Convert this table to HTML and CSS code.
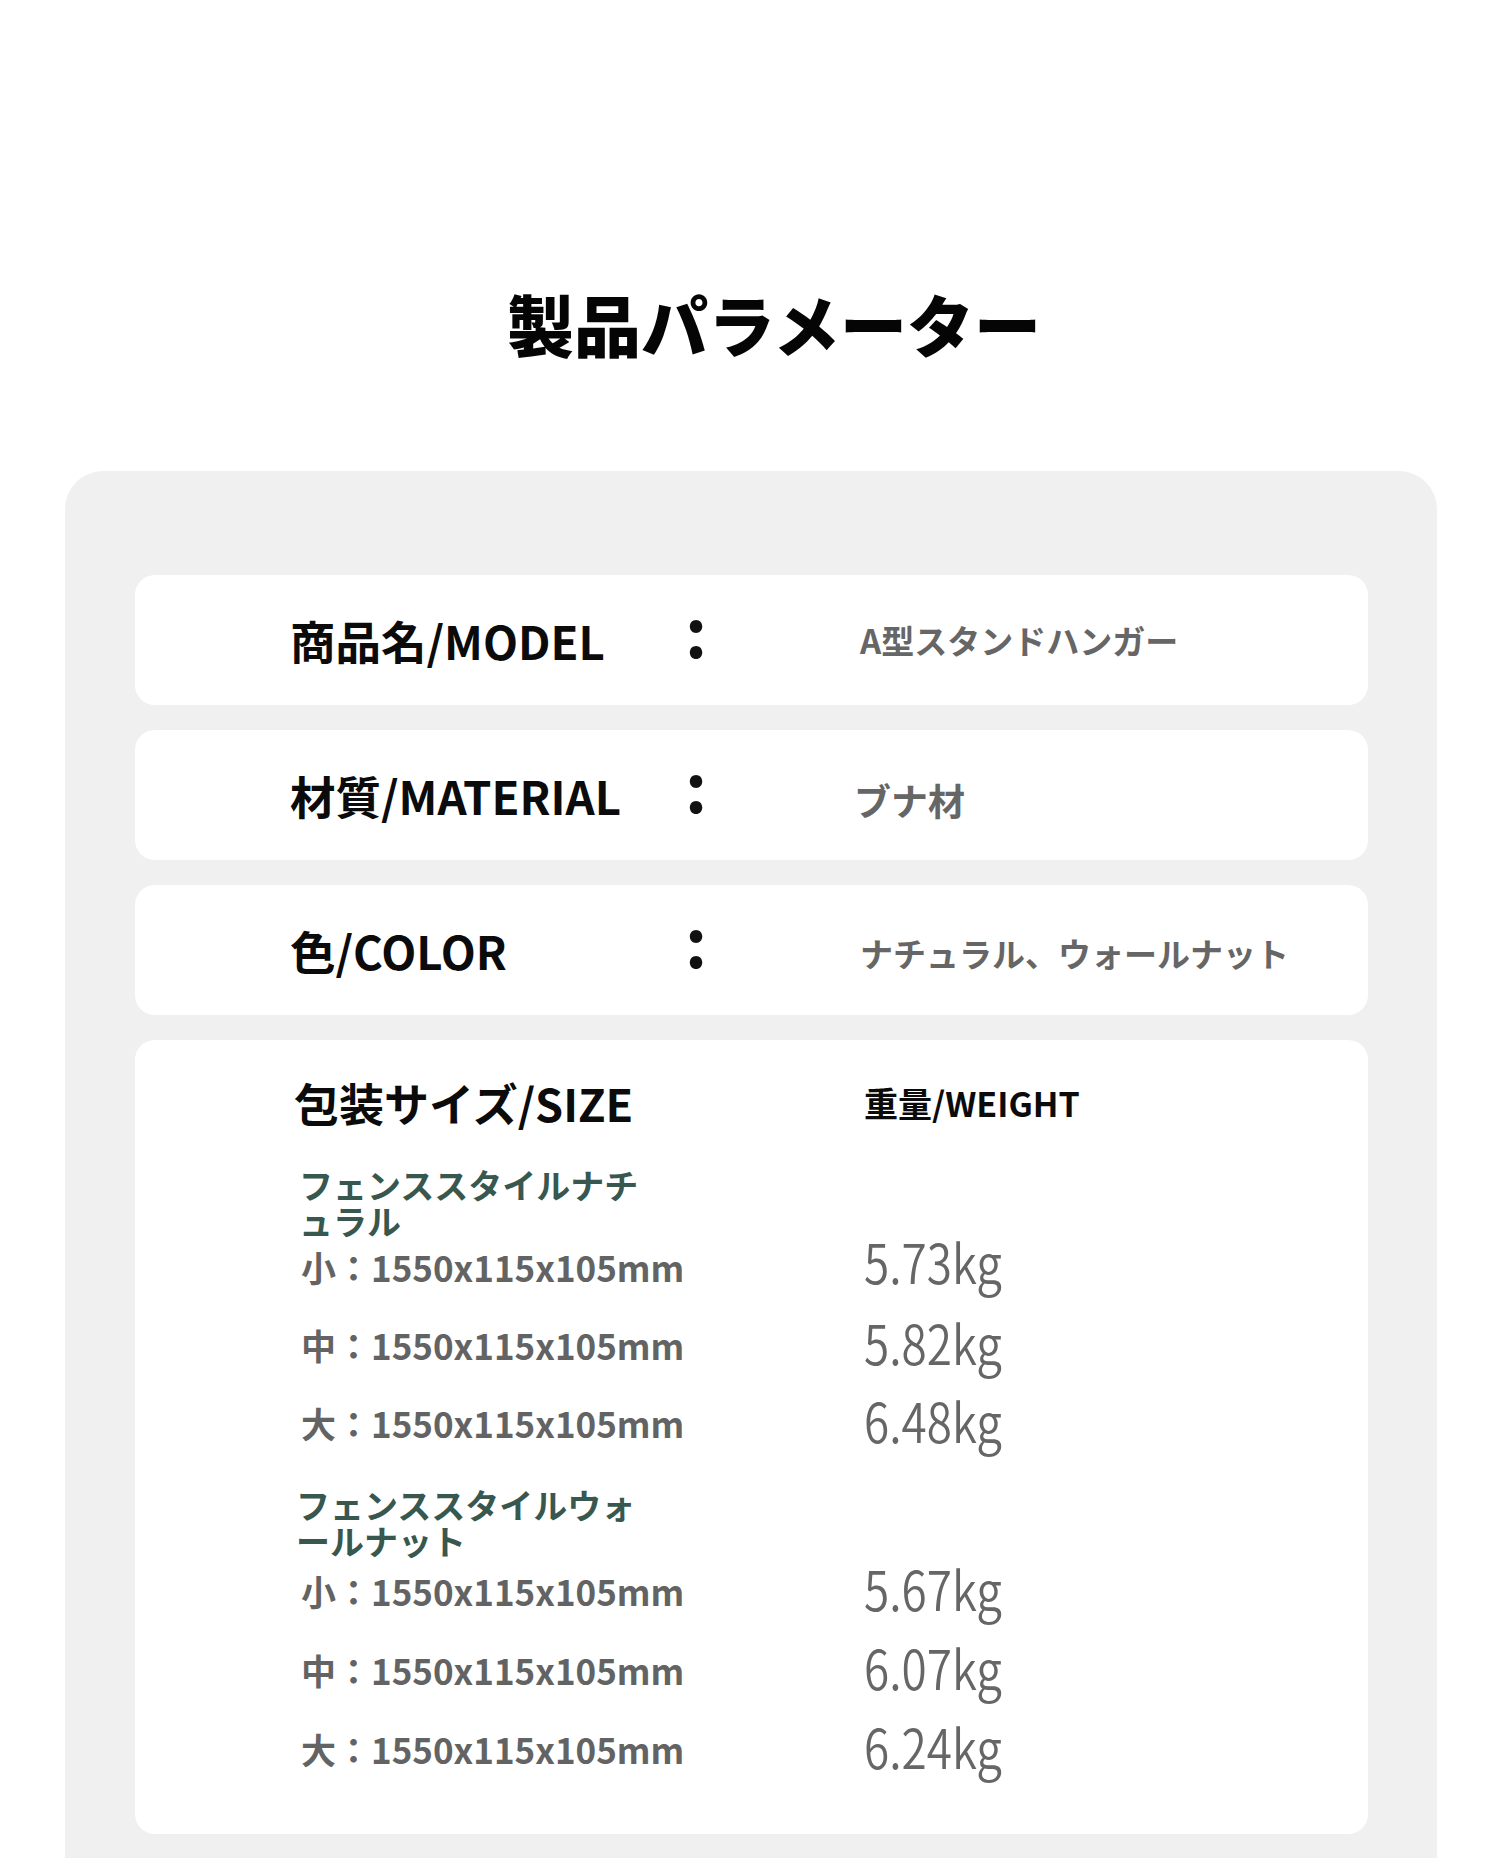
FILE: index.html
```html
<!DOCTYPE html>
<html lang="ja">
<head>
<meta charset="utf-8">
<title>製品パラメーター</title>
<link rel="stylesheet" href="styles.css">
</head>
<body>
<div class="page">
  <h1 class="title">製品パラメーター</h1>
  <section class="panel">
    <div class="card spec">
      <div class="label">商品名/MODEL</div>
      <div class="colon">:</div>
      <div class="value">A型スタンドハンガー</div>
    </div>
    <div class="card spec">
      <div class="label">材質/MATERIAL</div>
      <div class="colon">:</div>
      <div class="value value-lg">ブナ材</div>
    </div>
    <div class="card spec">
      <div class="label">色/COLOR</div>
      <div class="colon">:</div>
      <div class="value value-low">ナチュラル、ウォールナット</div>
    </div>
    <div class="card sizes">
      <div class="srow head">
        <div class="h-size">包装サイズ/SIZE</div>
        <div class="h-weight">重量/WEIGHT</div>
      </div>
      <div class="group">フェンススタイルナチュラル</div>
      <div class="srow item first"><div class="dim">小：1550x115x105mm</div><div class="kg kg-up">5.73kg</div></div>
      <div class="srow item"><div class="dim">中：1550x115x105mm</div><div class="kg">5.82kg</div></div>
      <div class="srow item"><div class="dim">大：1550x115x105mm</div><div class="kg">6.48kg</div></div>
      <div class="group group-2">フェンススタイルウォールナット</div>
      <div class="srow item first"><div class="dim">小：1550x115x105mm</div><div class="kg">5.67kg</div></div>
      <div class="srow item wide"><div class="dim">中：1550x115x105mm</div><div class="kg">6.07kg</div></div>
      <div class="srow item wide"><div class="dim">大：1550x115x105mm</div><div class="kg">6.24kg</div></div>
    </div>
  </section>
</div>
</body>
</html>
```
FILE: styles.css
```css
html, body {
  margin: 0;
  padding: 0;
  background: #ffffff;
  overflow: hidden;
}

body {
  font-family: "Noto Sans CJK JP", "Noto Sans", sans-serif;
  color: #0b0b0b;
}

.page {
  width: 1500px;
  padding-top: 289px;
}

.title {
  margin: 0 0 115px 48px;
  text-align: center;
  font-size: 67px;
  line-height: 67px;
  font-weight: 900;
  color: #050505;
}

.panel {
  margin-left: 65px;
  width: 1372px;
  box-sizing: border-box;
  padding: 104px 69px 24px 70px;
  background: #f0f0f0;
  border-radius: 38px 38px 0 0;
  display: flex;
  flex-direction: column;
  gap: 25px;
}

.card {
  background: #ffffff;
  border-radius: 20px;
}

.spec {
  height: 130px;
  box-sizing: border-box;
  padding-left: 155px;
  display: grid;
  grid-template-columns: 395px 175px 1fr;
  align-items: center;
}

.label {
  font-size: 45.5px;
  line-height: 46px;
  font-weight: 700;
  color: #0b0b0b;
}

.colon {
  font-size: 68px;
  line-height: 68px;
  font-weight: 700;
  color: #111;
  padding-bottom: 22px;
}

.value {
  font-size: 33px;
  line-height: 40px;
  font-weight: 700;
  color: #666666;
}

.value-lg {
  font-size: 37px;
  margin-left: -6px;
  padding-top: 9px;
}

.value-low {
  padding-top: 6px;
}

.sizes {
  height: 794px;
  box-sizing: border-box;
  padding: 40px 0 0 159px;
  display: flex;
  flex-direction: column;
}

.srow {
  display: grid;
  grid-template-columns: 570px 1fr;
  align-items: center;
}

.head {
  height: 46px;
}

.h-size {
  font-size: 45px;
  line-height: 46px;
  font-weight: 700;
  color: #0b0b0b;
}

.h-weight {
  font-size: 34px;
  line-height: 46px;
  font-weight: 700;
  color: #0b0b0b;
}

.group {
  margin-top: 41px;
  width: 350px;
  font-size: 34px;
  line-height: 36px;
  font-weight: 700;
  color: #37574f;
  line-break: anywhere;
  padding-left: 5px;
}

.group-2 {
  margin-top: 34px;
  padding-left: 2px;
}

.item {
  height: 60px;
  margin-top: 18px;
}

.item.wide {
  margin-top: 19px;
}

.item.first {
  margin-top: -2px;
}

.group-2 + .item.first {
  margin-top: 2px;
}

.dim {
  font-size: 35px;
  line-height: 60px;
  font-weight: 700;
  color: #636363;
  padding-left: 7px;
}

.kg {
  font-size: 54px;
  line-height: 54px;
  font-weight: 350;
  color: #666666;
  transform: scaleX(0.85);
  transform-origin: left center;
  margin-top: -6px;
}

.kg-up {
  margin-top: -12px;
}
```
